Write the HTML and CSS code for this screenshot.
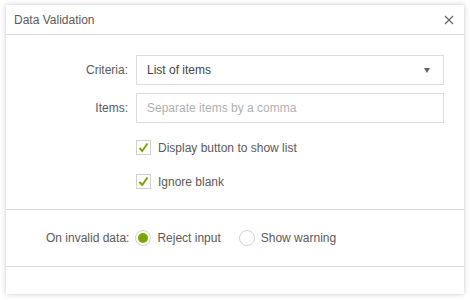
FILE: index.html
```html
<!DOCTYPE html>
<html>
<head>
<meta charset="utf-8">
<link rel="stylesheet" href="styles.css">
</head>
<body>
<div class="dialog">
  <div class="header">
    <span class="title">Data Validation</span>
    <svg class="close" width="10" height="10" viewBox="0 0 10 10"><path d="M1 1L9 9M9 1L1 9" stroke="#6a6a6a" stroke-width="1.3"/></svg>
  </div>
  <div class="body">
    <div class="row">
      <span class="label">Criteria:</span>
      <div class="field select"><span>List of items</span><span class="caret"></span></div>
    </div>
    <div class="row">
      <span class="label">Items:</span>
      <div class="field placeholder">Separate items by a comma</div>
    </div>
    <div class="check-row first">
      <span class="box"><svg width="11" height="11" viewBox="0 0 11 11"><path d="M1.5 6L4.2 9L9.5 1.5" fill="none" stroke="#7ca500" stroke-width="2"/></svg></span>
      <span>Display button to show list</span>
    </div>
    <div class="check-row">
      <span class="box"><svg width="11" height="11" viewBox="0 0 11 11"><path d="M1.5 6L4.2 9L9.5 1.5" fill="none" stroke="#7ca500" stroke-width="2"/></svg></span>
      <span>Ignore blank</span>
    </div>
  </div>
  <div class="section">
    <span class="label2">On invalid data:</span>
    <span class="radio on"></span><span class="rtext">Reject input</span>
    <span class="radio"></span><span class="rtext">Show warning</span>
  </div>
  <div class="footer"></div>
</div>
</body>
</html>
```
FILE: styles.css
```css
html, body { margin: 0; padding: 0; background: #fff; }
body { font-family: "Liberation Sans", Arial, sans-serif; font-size: 12px; color: #5a5a5a; padding: 5px 6px; }
.dialog { width: 458px; height: 289px; background: #fff; box-shadow: 0 0 5px rgba(0,0,0,0.22); display: flex; flex-direction: column; box-sizing: border-box; }
.header { height: 30px; border-bottom: 1px solid #d8d8d8; display: flex; align-items: center; justify-content: space-between; padding: 0 10px 0 8px; flex-shrink: 0; box-sizing: border-box; }
.title { font-size: 12px; color: #5a5a5a; }
.body { padding: 20px 20px 0 0; border-bottom: 1px solid #d8d8d8; height: 175px; box-sizing: border-box; flex-shrink: 0; }
.row { display: flex; align-items: center; margin-bottom: 8px; }
.label { width: 130px; text-align: right; padding-right: 8px; box-sizing: border-box; }
.field { flex: 1; height: 30px; border: 1px solid #dcdcdc; box-sizing: border-box; display: flex; align-items: center; padding: 0 10px; }
.select { justify-content: space-between; color: #444; }
.caret { width: 0; height: 0; border-left: 3.5px solid transparent; border-right: 3.5px solid transparent; border-top: 5px solid #666; margin-right: 3px; }
.placeholder { color: #b0b0b0; }
.check-row { display: flex; align-items: center; margin-left: 130px; height: 15px; margin-bottom: 19px; }
.check-row.first { margin-top: 17px; }
.box { width: 15px; height: 15px; border: 1px solid #d0d0d0; box-sizing: border-box; display: flex; align-items: center; justify-content: center; margin-right: 7px; }
.section { height: 57px; border-bottom: 1px solid #d8d8d8; display: flex; align-items: center; padding-left: 40px; box-sizing: border-box; flex-shrink: 0; }
.label2 { margin-right: 6px; }
.radio { width: 16px; height: 16px; border: 1px solid #d0d0d0; border-radius: 50%; box-sizing: border-box; display: inline-flex; align-items: center; justify-content: center; margin-right: 6px; }
.radio.on::after { content: ""; width: 10px; height: 10px; border-radius: 50%; background: #7ca500; }
.rtext { margin-right: 18px; }
.footer { flex: 1; }
```
